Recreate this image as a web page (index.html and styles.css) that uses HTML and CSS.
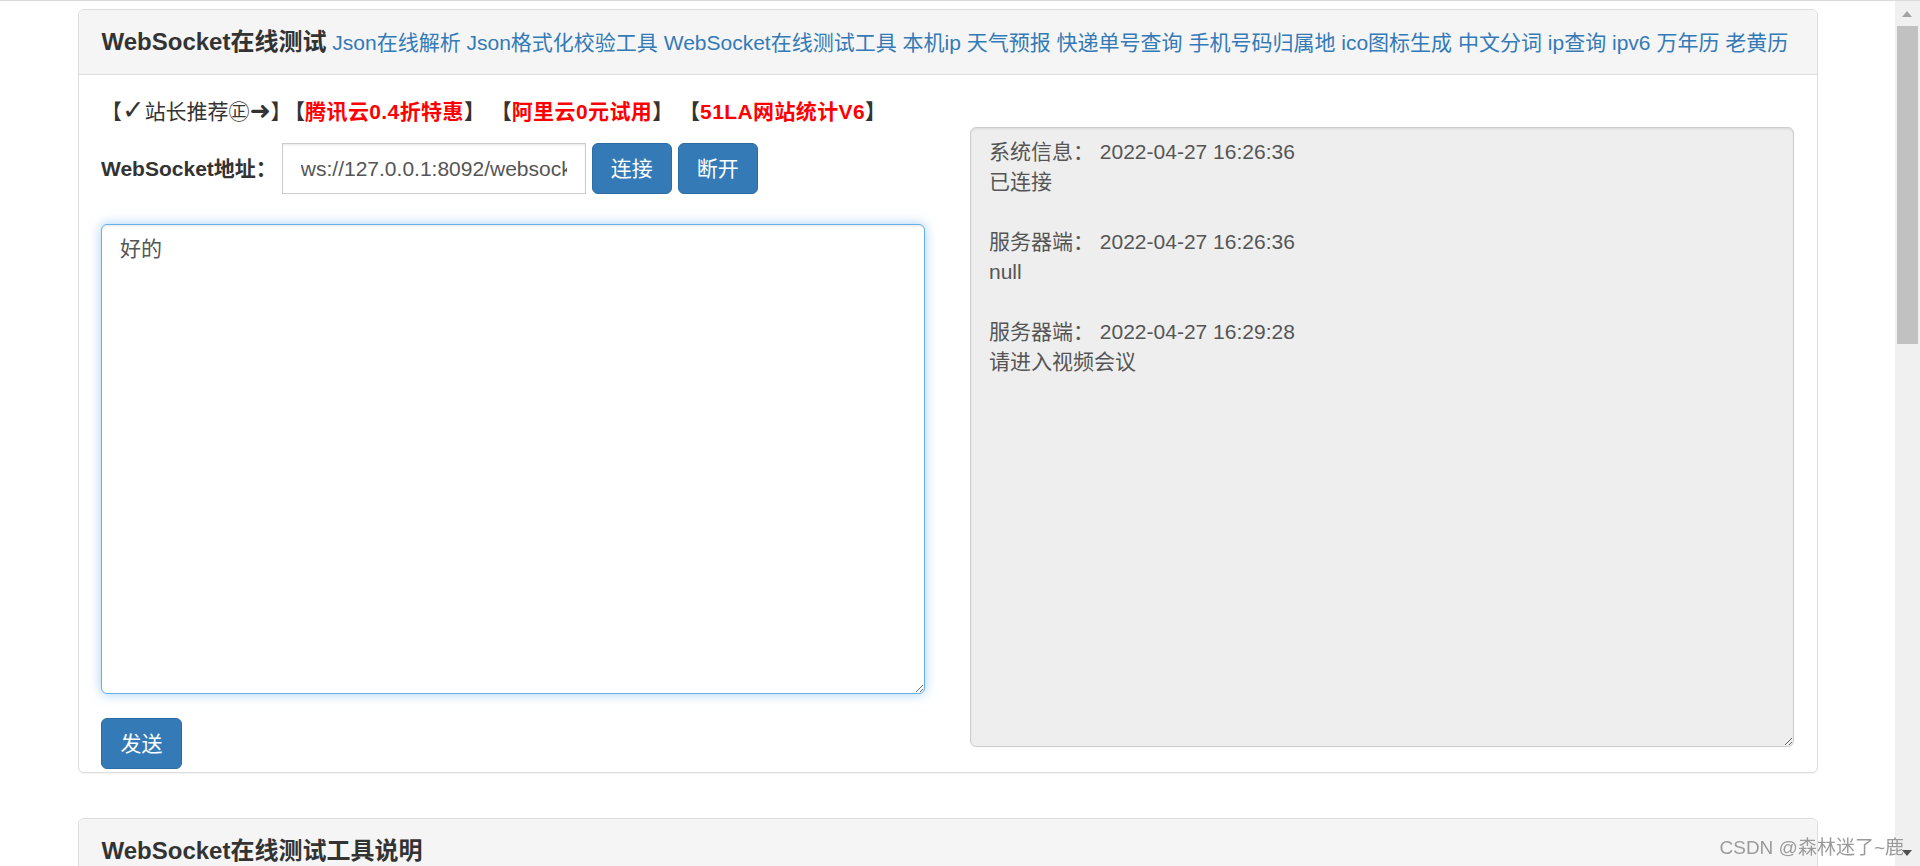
FILE: index.html
```html
<!DOCTYPE html>
<html lang="zh-CN">
<head>
<meta charset="utf-8">
<title>WebSocket在线测试</title>
<link rel="stylesheet" href="styles.css">
</head>
<body>
<div class="topline"></div>
<div class="page">
  <div class="container">
    <div class="panel">
      <div class="panel-heading">
        <span class="panel-title">WebSocket在线测试</span>
        <a href="#">Json在线解析</a>
        <a href="#">Json格式化校验工具</a>
        <a href="#">WebSocket在线测试工具</a>
        <a href="#">本机ip</a>
        <a href="#">天气预报</a>
        <a href="#">快递单号查询</a>
        <a href="#">手机号码归属地</a>
        <a href="#">ico图标生成</a>
        <a href="#">中文分词</a>
        <a href="#">ip查询</a>
        <a href="#">ipv6</a>
        <a href="#">万年历</a>
        <a href="#">老黄历</a>
      </div>
      <div class="panel-body">
        <div class="recommend">
          <span class="rec-first">【<span class="sym">✓</span>站长推荐㊣<span class="sym arrow">➜</span>】</span><b class="rec">【<span class="red">腾讯云0.4折特惠</span>】</b>
          <b class="rec">【<span class="red">阿里云0元试用</span>】</b>
          <b class="rec">【<span class="red">51LA网站统计V6</span>】</b>
        </div>
        <div class="row">
          <div class="col">
            <div class="addr-row">
              <label class="addr-label">WebSocket地址：</label>
              <input class="addr-input" type="text" value="ws://127.0.0.1:8092/websocket">
              <button class="btn">连接</button>
              <button class="btn">断开</button>
            </div>
            <textarea class="msg">好的</textarea>
            <div><button class="btn send">发送</button></div>
          </div>
          <div class="col">
            <textarea class="log" readonly>系统信息： 2022-04-27 16:26:36
已连接

服务器端： 2022-04-27 16:26:36
null

服务器端： 2022-04-27 16:29:28
请进入视频会议</textarea>
          </div>
        </div>
      </div>
    </div>

    <div class="panel">
      <div class="panel-heading">
        <span class="panel-title">WebSocket在线测试工具说明</span>
      </div>
      <div class="panel-body">
        <p class="desc">WebSocket在线测试工具，可以用来测试WebSocket服务端的连接、发送与接收消息。</p>
      </div>
    </div>
  </div>
</div>

<div class="scrollbar">
  <div class="sb-up"></div>
  <div class="sb-thumb"></div>
  <div class="sb-down"></div>
</div>
<div class="watermark">CSDN @森林迷了~鹿</div>
</body>
</html>
```
FILE: styles.css
```css
html, body {
  margin: 0;
  padding: 0;
  height: 100%;
  overflow: hidden;
  background: #fff;
}
body {
  font-family: "Liberation Sans", "Noto Sans CJK SC", "DejaVu Sans", sans-serif;
  font-size: 21px;
  line-height: 30px;
  color: #333;
}
.topline {
  height: 1px;
  background: #dadada;
}
.page {
  width: 1895px;
}
.container {
  width: 1740px;
  margin: 8px auto 0;
}
.panel {
  border: 1px solid #ddd;
  border-radius: 6px;
  background: #fff;
  margin-bottom: 45px;
  box-shadow: 0 1px 1px rgba(0,0,0,.05);
}
.panel-heading {
  background: #f5f5f5;
  border-bottom: 1px solid #ddd;
  border-radius: 5px 5px 0 0;
  padding: 15px 22px 15px 23px;
  line-height: 34px;
  height: 34px;
  white-space: nowrap;
  overflow: hidden;
}
.panel-title {
  font-size: 24px;
  font-weight: bold;
  color: #333;
}
.panel-heading a {
  color: #337ab7;
  text-decoration: none;
  font-size: 21px;
}
.panel-body {
  padding: 22px 22.5px 3px 22.5px;
}
.recommend {
  height: 30px;
  line-height: 30px;
  white-space: nowrap;
}
.rec-first {
  font-weight: normal;
  margin-right: 3px;
}
.sym {
  font-family: "DejaVu Sans", sans-serif;
  font-size: 27px;
  line-height: 0;
}
.sym.arrow {
  font-weight: bold;
  font-size: 25px;
}
.rec {
  font-weight: bold;
  color: #333;
}
.red {
  color: #f00;
  letter-spacing: 0.4px;
}
.row {
  display: grid;
  grid-template-columns: 1fr 1fr;
  column-gap: 45px;
}
.addr-row {
  margin-top: 16px;
  display: flex;
  align-items: center;
  gap: 6px;
  height: 51px;
}
.addr-label {
  font-weight: bold;
  margin-right: -1px;
}
.addr-input {
  box-sizing: border-box;
  width: 304px;
  height: 51px;
  margin: 0;
  border: 1px solid #ccc;
  border-radius: 0;
  padding: 0 18px;
  font-family: "Liberation Sans", "Noto Sans CJK SC", sans-serif;
  font-size: 21px;
  color: #555;
  box-shadow: inset 0 1.5px 1.5px rgba(0,0,0,.075);
  outline: none;
}
.btn {
  box-sizing: border-box;
  height: 51px;
  margin: 0;
  padding: 0 18px;
  background: #337ab7;
  border: 1px solid #2e6da4;
  border-radius: 6px;
  color: #fff;
  font-family: "Liberation Sans", "Noto Sans CJK SC", sans-serif;
  font-size: 21px;
  line-height: 30px;
  cursor: pointer;
}
.msg {
  display: block;
  box-sizing: border-box;
  width: 100%;
  height: 470px;
  margin: 30px 0 0;
  padding: 9px 18px;
  border: 1px solid #66afe9;
  border-radius: 6px;
  font-family: "Liberation Sans", "Noto Sans CJK SC", sans-serif;
  font-size: 21px;
  line-height: 30px;
  color: #555;
  outline: none;
  box-shadow: inset 0 1.5px 1.5px rgba(0,0,0,.075), 0 0 12px rgba(102,175,233,.6);
}
.send {
  margin-top: 24px;
  width: 81px;
  display: block;
}
.log {
  display: block;
  box-sizing: border-box;
  width: 100%;
  height: 620px;
  margin: 0;
  padding: 9px 18px;
  border: 1px solid #ccc;
  border-radius: 6px;
  background: #eee;
  font-family: "Liberation Sans", "Noto Sans CJK SC", sans-serif;
  font-size: 21px;
  line-height: 30px;
  color: #555;
  outline: none;
  box-shadow: inset 0 1.5px 1.5px rgba(0,0,0,.075);
}
.desc {
  margin: 0 0 20px;
}

/* window chrome overlays */
.scrollbar {
  position: fixed;
  top: 1px;
  right: 0;
  bottom: 0;
  width: 25px;
  background: #f0f0f0;
}
.sb-up {
  position: absolute;
  top: 10px;
  left: 7px;
  width: 0;
  height: 0;
  border-left: 5.5px solid transparent;
  border-right: 5.5px solid transparent;
  border-bottom: 6px solid #a3a3a3;
}
.sb-thumb {
  position: absolute;
  top: 25px;
  left: 2px;
  width: 21px;
  height: 318px;
  background: #c1c1c1;
}
.sb-down {
  position: absolute;
  bottom: 10px;
  left: 7px;
  width: 0;
  height: 0;
  border-left: 5.5px solid transparent;
  border-right: 5.5px solid transparent;
  border-top: 6px solid #505050;
}
.watermark {
  position: fixed;
  right: 16px;
  bottom: 6px;
  font-size: 19px;
  line-height: 24px;
  color: #9a9a9a;
  font-family: "Liberation Sans", "Noto Sans CJK SC", sans-serif;
  text-shadow: 0 0 1px rgba(255,255,255,.8);
}
```
